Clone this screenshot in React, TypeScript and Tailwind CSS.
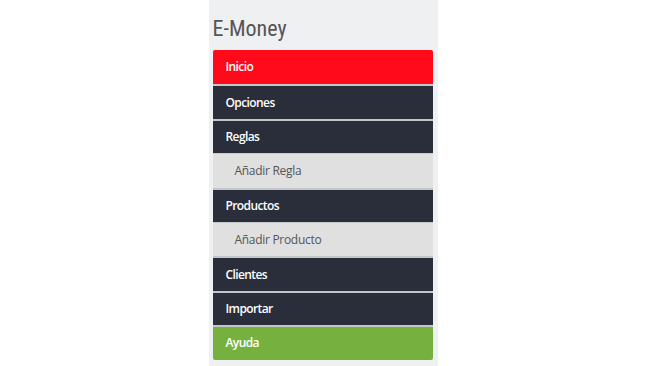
import React from "react";

type Kind = "red" | "dark" | "sub" | "green";

const items: { label: string; kind: Kind }[] = [
  { label: "Inicio", kind: "red" },
  { label: "Opciones", kind: "dark" },
  { label: "Reglas", kind: "dark" },
  { label: "Añadir Regla", kind: "sub" },
  { label: "Productos", kind: "dark" },
  { label: "Añadir Producto", kind: "sub" },
  { label: "Clientes", kind: "dark" },
  { label: "Importar", kind: "dark" },
  { label: "Ayuda", kind: "green" },
];

const kindClass: Record<Kind, string> = {
  red: "bg-[#ff0a1b] text-white font-semibold tracking-[-0.6px] pl-[13px]",
  dark: "bg-[#2a2d3a] text-white font-semibold tracking-[-0.6px] pl-[13px]",
  green: "bg-[#76b13f] text-white font-semibold tracking-[-0.6px] pl-[13px]",
  sub: "bg-[#e0e0e0] text-[#555] tracking-[-0.3px] pl-[22px]",
};

export default function App() {
  return (
    <div className="w-[646px] h-[366px] bg-white flex justify-center overflow-hidden">
      <div className="w-[229px] h-full bg-[#eff0f2] pl-[4px] pr-[5px] flex flex-col">
        <div className="h-[50px] flex items-end pb-[10px] text-[22px] leading-none text-[#555] font-['Liberation_Sans_Narrow','Roboto_Condensed',sans-serif]">
          E-Money
        </div>
        <div className="flex flex-col rounded-[2px] overflow-hidden font-['Open_Sans',sans-serif] text-[12px]">
          {items.map((it, i) => (
            <div
              key={it.label}
              className={
                "h-[34.4px] flex items-center " +
                (i === 0
                  ? ""
                  : it.kind === "sub"
                  ? "border-t border-[#c9cacc] "
                  : "border-t-2 border-[#c4c5c8] ") +
                kindClass[it.kind]
              }
            >
              {it.label}
            </div>
          ))}
        </div>
      </div>
    </div>
  );
}
